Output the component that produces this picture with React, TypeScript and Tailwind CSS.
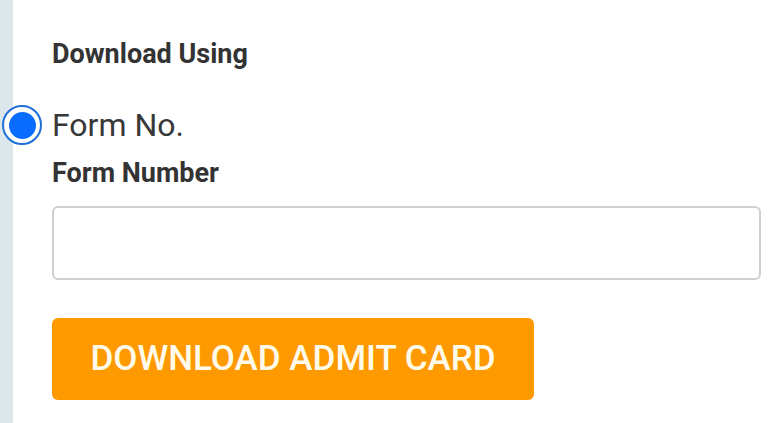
export default function App() {
  return (
    <div className="flex h-[423px] w-[768px] overflow-hidden bg-white font-['Roboto',sans-serif] text-[#333]">
      <div className="w-[13px] shrink-0 bg-[#dce7eb]" />
      <div className="flex flex-1 flex-col pl-[39px] pr-[7px]">
        <div className="mt-[36px] text-[27px] font-bold leading-[36px]">Download Using</div>
        <label className="-ml-[50px] mt-[33px] flex items-center gap-[10px]">
          <span className="flex h-[40px] w-[40px] items-center justify-center rounded-full border-[2px] border-[#1f6fd6] bg-white">
            <span className="h-[27px] w-[27px] rounded-full bg-[#0a6cff]" />
          </span>
          <span className="text-[32px] leading-[40px] text-[#383838]">Form No.</span>
        </label>
        <div className="mt-[12px] text-[27px] font-bold leading-[32px]">Form Number</div>
        <input
          className="mt-[17px] h-[74px] w-full rounded-[6px] border-[2px] border-[#cfcfcf] bg-white px-3 text-[24px] outline-none"
          type="text"
        />
        <button className="mt-[38px] flex h-[82px] w-[482px] items-center justify-center rounded-[6px] bg-[#ff9900] text-[35px] font-medium text-[#fffbea]">
          DOWNLOAD ADMIT CARD
        </button>
      </div>
    </div>
  )
}
